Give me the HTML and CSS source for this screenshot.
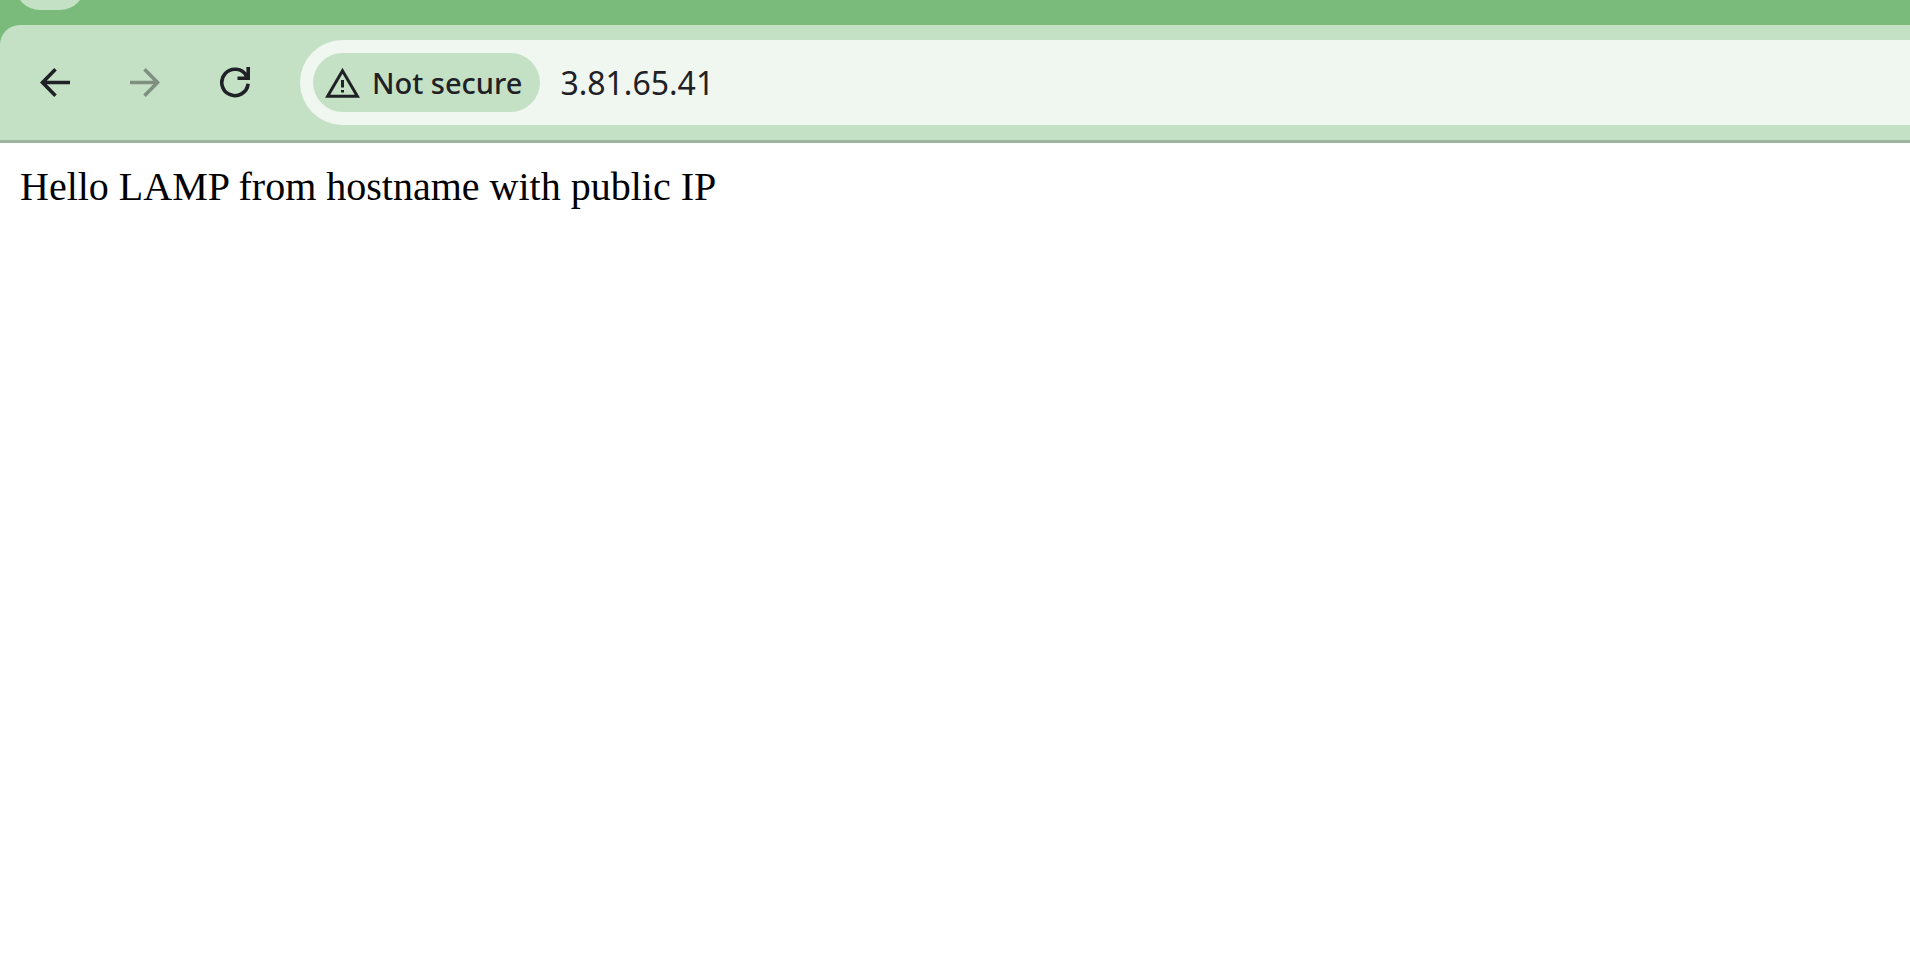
FILE: index.html
```html
<!DOCTYPE html>
<html lang="en">
<head>
<meta charset="utf-8">
<title>3.81.65.41</title>
<link rel="stylesheet" href="styles.css">
</head>
<body>
<header class="browser">
  <div class="tab-strip">
    <button class="tab-search" type="button" aria-label="Search tabs"></button>
  </div>
  <div class="toolbar">
    <nav class="nav">
      <button class="nav-button" type="button" aria-label="Back">
        <svg class="nav-icon" viewBox="0 0 30 31"><path d="M30 15.5H3M15.5 2.300 2.500 15.500 15.500 28.700"/></svg>
      </button>
      <button class="nav-button" type="button" aria-label="Forward" disabled>
        <svg class="nav-icon" viewBox="0 0 30 31"><path d="M0 15.5H27M14.500 2.300 27.500 15.500 14.500 28.700"/></svg>
      </button>
      <button class="nav-button" type="button" aria-label="Reload">
        <svg class="nav-icon" viewBox="0 0 30 31"><path d="M28.100 16.800A13.2 13.2 0 1 1 26.500 9L27.500 11M28.200 0V11.200H17.500"/></svg>
      </button>
    </nav>
    <div class="omnibox">
      <button class="security-chip" type="button">
        <svg class="warning-icon" viewBox="0 0 35 30"><path class="warning-outline" d="M17.500 2.800 2.600 28.300H32.400Z"/><path class="warning-mark" d="M16 12h3v7.500h-3zM16 22h3v2.500h-3z"/></svg>
        <span>Not secure</span>
      </button>
      <input class="address" type="text" aria-label="Address" value="3.81.65.41" spellcheck="false">
    </div>
  </div>
</header>
<main class="page">Hello LAMP from hostname with public IP</main>
</body>
</html>
```
FILE: styles.css
```css
* {
  box-sizing: border-box;
}

body {
  margin: 0;
  background: #ffffff;
}

button,
input {
  margin: 0;
  padding: 0;
  border: 0;
  background: none;
  color: inherit;
}

.browser {
  background: #7abb7c;
  color: #1f2126;
  font-family: "Noto Sans", "Open Sans", sans-serif;
}

.tab-strip {
  display: flex;
  align-items: flex-end;
  height: 25px;
  padding: 0 15px 15px;
  overflow: hidden;
}

.tab-search {
  flex: none;
  width: 70px;
  height: 70px;
  border-radius: 25px;
  background: #c5e1c5;
}

.toolbar {
  display: flex;
  align-items: center;
  gap: 35px;
  padding: 15px 0 15px 25px;
  border-bottom: 3px solid #9fb4a0;
  border-top-left-radius: 20px;
  background: #c5e1c5;
}

.nav {
  display: flex;
  gap: 30px;
}

.nav-button {
  display: flex;
  align-items: center;
  justify-content: center;
  width: 60px;
  height: 61px;
}

.nav-button:disabled {
  color: #7f9081;
}

.nav-icon {
  width: 30px;
  height: 31px;
  fill: none;
  stroke: currentColor;
  stroke-width: 3.6;
}

.omnibox {
  display: flex;
  flex: 1;
  align-items: center;
  gap: 20px;
  height: 85px;
  padding-left: 13px;
  border-radius: 43px 0 0 43px;
  background: #f0f7f0;
}

.security-chip {
  display: flex;
  align-items: center;
  gap: 12px;
  height: 59px;
  padding: 0 18px 0 12px;
  border-radius: 30px;
  background: #c5e1c5;
  font-family: inherit;
  font-size: 29px;
  font-weight: 500;
  line-height: 40px;
  white-space: nowrap;
}

.warning-icon {
  width: 35px;
  height: 30px;
}

.warning-outline {
  fill: none;
  stroke: currentColor;
  stroke-width: 3;
}

.warning-mark {
  fill: currentColor;
}

.address {
  flex: 1;
  min-width: 0;
  height: 58px;
  font-family: inherit;
  font-size: 32px;
  outline: none;
}

.page {
  padding: 20px;
  color: #000000;
  font-family: "Liberation Serif", "Times New Roman", serif;
  font-size: 40px;
  line-height: 48px;
}
```
